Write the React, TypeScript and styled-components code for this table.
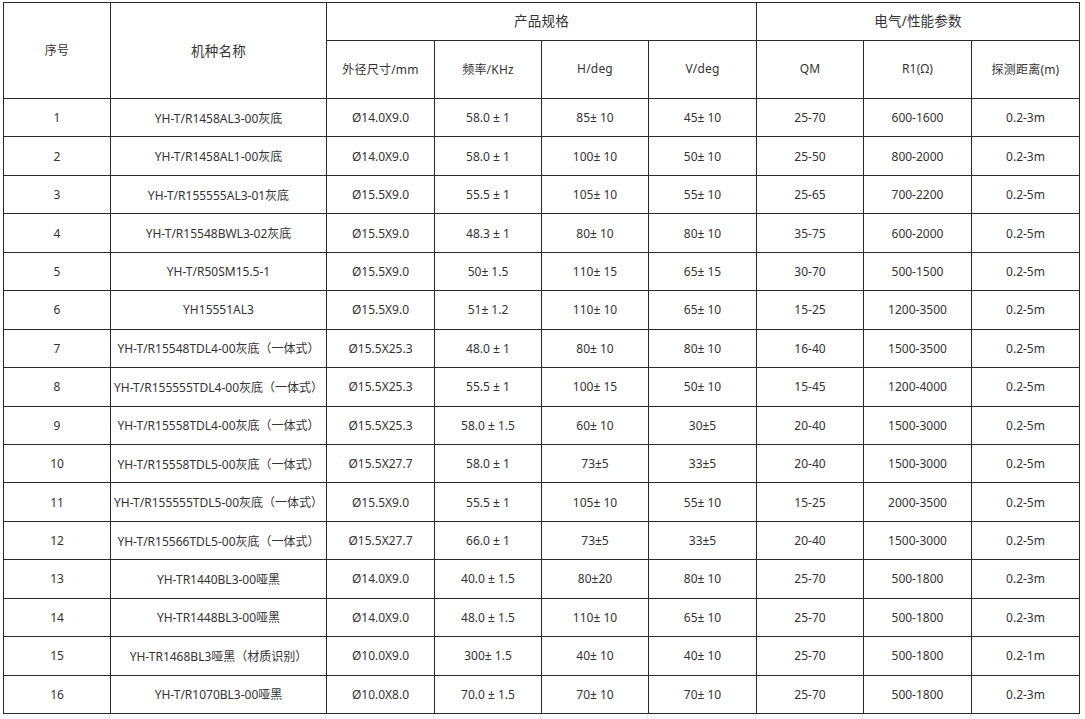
import styled, {createGlobalStyle} from "styled-components";

interface Row{
    no: number;
    model: string;
    size: string;
    freq: string;
    h: string;
    v: string;
    qm: string;
    r1: string;
    dist: string;
}

const rows: Row[] = [
    {no: 1, model: "YH-T/R1458AL3-00灰底", size: "Ø14.0X9.0", freq: "58.0 ± 1", h: "85± 10", v: "45± 10", qm: "25-70", r1: "600-1600", dist: "0.2-3m"},
    {no: 2, model: "YH-T/R1458AL1-00灰底", size: "Ø14.0X9.0", freq: "58.0 ± 1", h: "100± 10", v: "50± 10", qm: "25-50", r1: "800-2000", dist: "0.2-3m"},
    {no: 3, model: "YH-T/R155555AL3-01灰底", size: "Ø15.5X9.0", freq: "55.5 ± 1", h: "105± 10", v: "55± 10", qm: "25-65", r1: "700-2200", dist: "0.2-5m"},
    {no: 4, model: "YH-T/R15548BWL3-02灰底", size: "Ø15.5X9.0", freq: "48.3 ± 1", h: "80± 10", v: "80± 10", qm: "35-75", r1: "600-2000", dist: "0.2-5m"},
    {no: 5, model: "YH-T/R50SM15.5-1", size: "Ø15.5X9.0", freq: "50± 1.5", h: "110± 15", v: "65± 15", qm: "30-70", r1: "500-1500", dist: "0.2-5m"},
    {no: 6, model: "YH15551AL3", size: "Ø15.5X9.0", freq: "51± 1.2", h: "110± 10", v: "65± 10", qm: "15-25", r1: "1200-3500", dist: "0.2-5m"},
    {no: 7, model: "YH-T/R15548TDL4-00灰底（一体式）", size: "Ø15.5X25.3", freq: "48.0 ± 1", h: "80± 10", v: "80± 10", qm: "16-40", r1: "1500-3500", dist: "0.2-5m"},
    {no: 8, model: "YH-T/R155555TDL4-00灰底（一体式）", size: "Ø15.5X25.3", freq: "55.5 ± 1", h: "100± 15", v: "50± 10", qm: "15-45", r1: "1200-4000", dist: "0.2-5m"},
    {no: 9, model: "YH-T/R15558TDL4-00灰底（一体式）", size: "Ø15.5X25.3", freq: "58.0 ± 1.5", h: "60± 10", v: "30±5", qm: "20-40", r1: "1500-3000", dist: "0.2-5m"},
    {no: 10, model: "YH-T/R15558TDL5-00灰底（一体式）", size: "Ø15.5X27.7", freq: "58.0 ± 1", h: "73±5", v: "33±5", qm: "20-40", r1: "1500-3000", dist: "0.2-5m"},
    {no: 11, model: "YH-T/R155555TDL5-00灰底（一体式）", size: "Ø15.5X9.0", freq: "55.5 ± 1", h: "105± 10", v: "55± 10", qm: "15-25", r1: "2000-3500", dist: "0.2-5m"},
    {no: 12, model: "YH-T/R15566TDL5-00灰底（一体式）", size: "Ø15.5X27.7", freq: "66.0 ± 1", h: "73±5", v: "33±5", qm: "20-40", r1: "1500-3000", dist: "0.2-5m"},
    {no: 13, model: "YH-TR1440BL3-00哑黑", size: "Ø14.0X9.0", freq: "40.0 ± 1.5", h: "80±20", v: "80± 10", qm: "25-70", r1: "500-1800", dist: "0.2-3m"},
    {no: 14, model: "YH-TR1448BL3-00哑黑", size: "Ø14.0X9.0", freq: "48.0 ± 1.5", h: "110± 10", v: "65± 10", qm: "25-70", r1: "500-1800", dist: "0.2-3m"},
    {no: 15, model: "YH-TR1468BL3哑黑（材质识别）", size: "Ø10.0X9.0", freq: "300± 1.5", h: "40± 10", v: "40± 10", qm: "25-70", r1: "500-1800", dist: "0.2-1m"},
    {no: 16, model: "YH-T/R1070BL3-00哑黑", size: "Ø10.0X8.0", freq: "70.0 ± 1.5", h: "70± 10", v: "70± 10", qm: "25-70", r1: "500-1800", dist: "0.2-3m"},
];

const colWidths = [107, 216, 108, 107, 107, 108, 107, 108, 108];

function App(){
    return(
        <>
            <GlobalStyle/>
            <Page>
                <Sheet>
                    <colgroup>
                        {colWidths.map((w, i) => <col key={i} style={{width: w}}/>)}
                    </colgroup>
                    <thead>
                        <GroupRow>
                            <HeadCell rowSpan={2}>序号</HeadCell>
                            <HeadCell rowSpan={2} big>机种名称</HeadCell>
                            <GroupCell colSpan={4}>产品规格</GroupCell>
                            <GroupCell colSpan={3}>电气/性能参数</GroupCell>
                        </GroupRow>
                        <SubRow>
                            <HeadCell>外径尺寸/mm</HeadCell>
                            <HeadCell>频率/KHz</HeadCell>
                            <HeadCell>H/deg</HeadCell>
                            <HeadCell>V/deg</HeadCell>
                            <HeadCell>QM</HeadCell>
                            <HeadCell>R1(Ω)</HeadCell>
                            <HeadCell>探测距离(m)</HeadCell>
                        </SubRow>
                    </thead>
                    <tbody>
                        {rows.map(r => (
                            <DataRow key={r.no}>
                                <Cell>{r.no}</Cell>
                                <Cell>{r.model}</Cell>
                                <Cell>{r.size}</Cell>
                                <Cell>{r.freq}</Cell>
                                <Cell>{r.h}</Cell>
                                <Cell>{r.v}</Cell>
                                <Cell>{r.qm}</Cell>
                                <Cell>{r.r1}</Cell>
                                <Cell>{r.dist}</Cell>
                            </DataRow>
                        ))}
                    </tbody>
                </Sheet>
                <GridTail>
                    {colWidths.map((w, i) => <TailCol key={i} style={{width: w}}/>)}
                </GridTail>
            </Page>
        </>
    )
}

const GlobalStyle = createGlobalStyle`
    body{
        margin: 0;
        background: #ffffff;
        font-family: "Noto Sans", "Noto Sans CJK SC", sans-serif;
    }
`

const Page = styled.div`
    padding: 2px 0 0 3px;
    width: 1085px;
    height: 719px;
    box-sizing: border-box;
    overflow: hidden;
`

const Sheet = styled.table`
    border-collapse: collapse;
    table-layout: fixed;
    width: 1076px;
    color: #333;
    font-size: 12px;
`

const GroupRow = styled.tr`
    height: 38px;
`

const SubRow = styled.tr`
    height: 58px;
`

const DataRow = styled.tr`
    height: 38.45px;
`

const HeadCell = styled.th<{big?: boolean}>`
    border: 1.3px solid #2a2a2a;
    font-weight: normal;
    font-size: ${p => p.big ? "13.5px" : "12px"};
    text-align: center;
    vertical-align: middle;
    padding: 0 0 2px;
    letter-spacing: 0.2px;
`

const GroupCell = styled(HeadCell)`
    font-size: 13.5px;
    padding: 0 0 4px;
`

const Cell = styled.td`
    border: 1.3px solid #2a2a2a;
    text-align: center;
    vertical-align: middle;
    padding: 0;
    white-space: nowrap;
    overflow: hidden;
`

const GridTail = styled.div`
    display: flex;
    height: 8px;
`

const TailCol = styled.div`
    border-right: 1px solid #e4e4e4;
    box-sizing: border-box;
`

export default App;
